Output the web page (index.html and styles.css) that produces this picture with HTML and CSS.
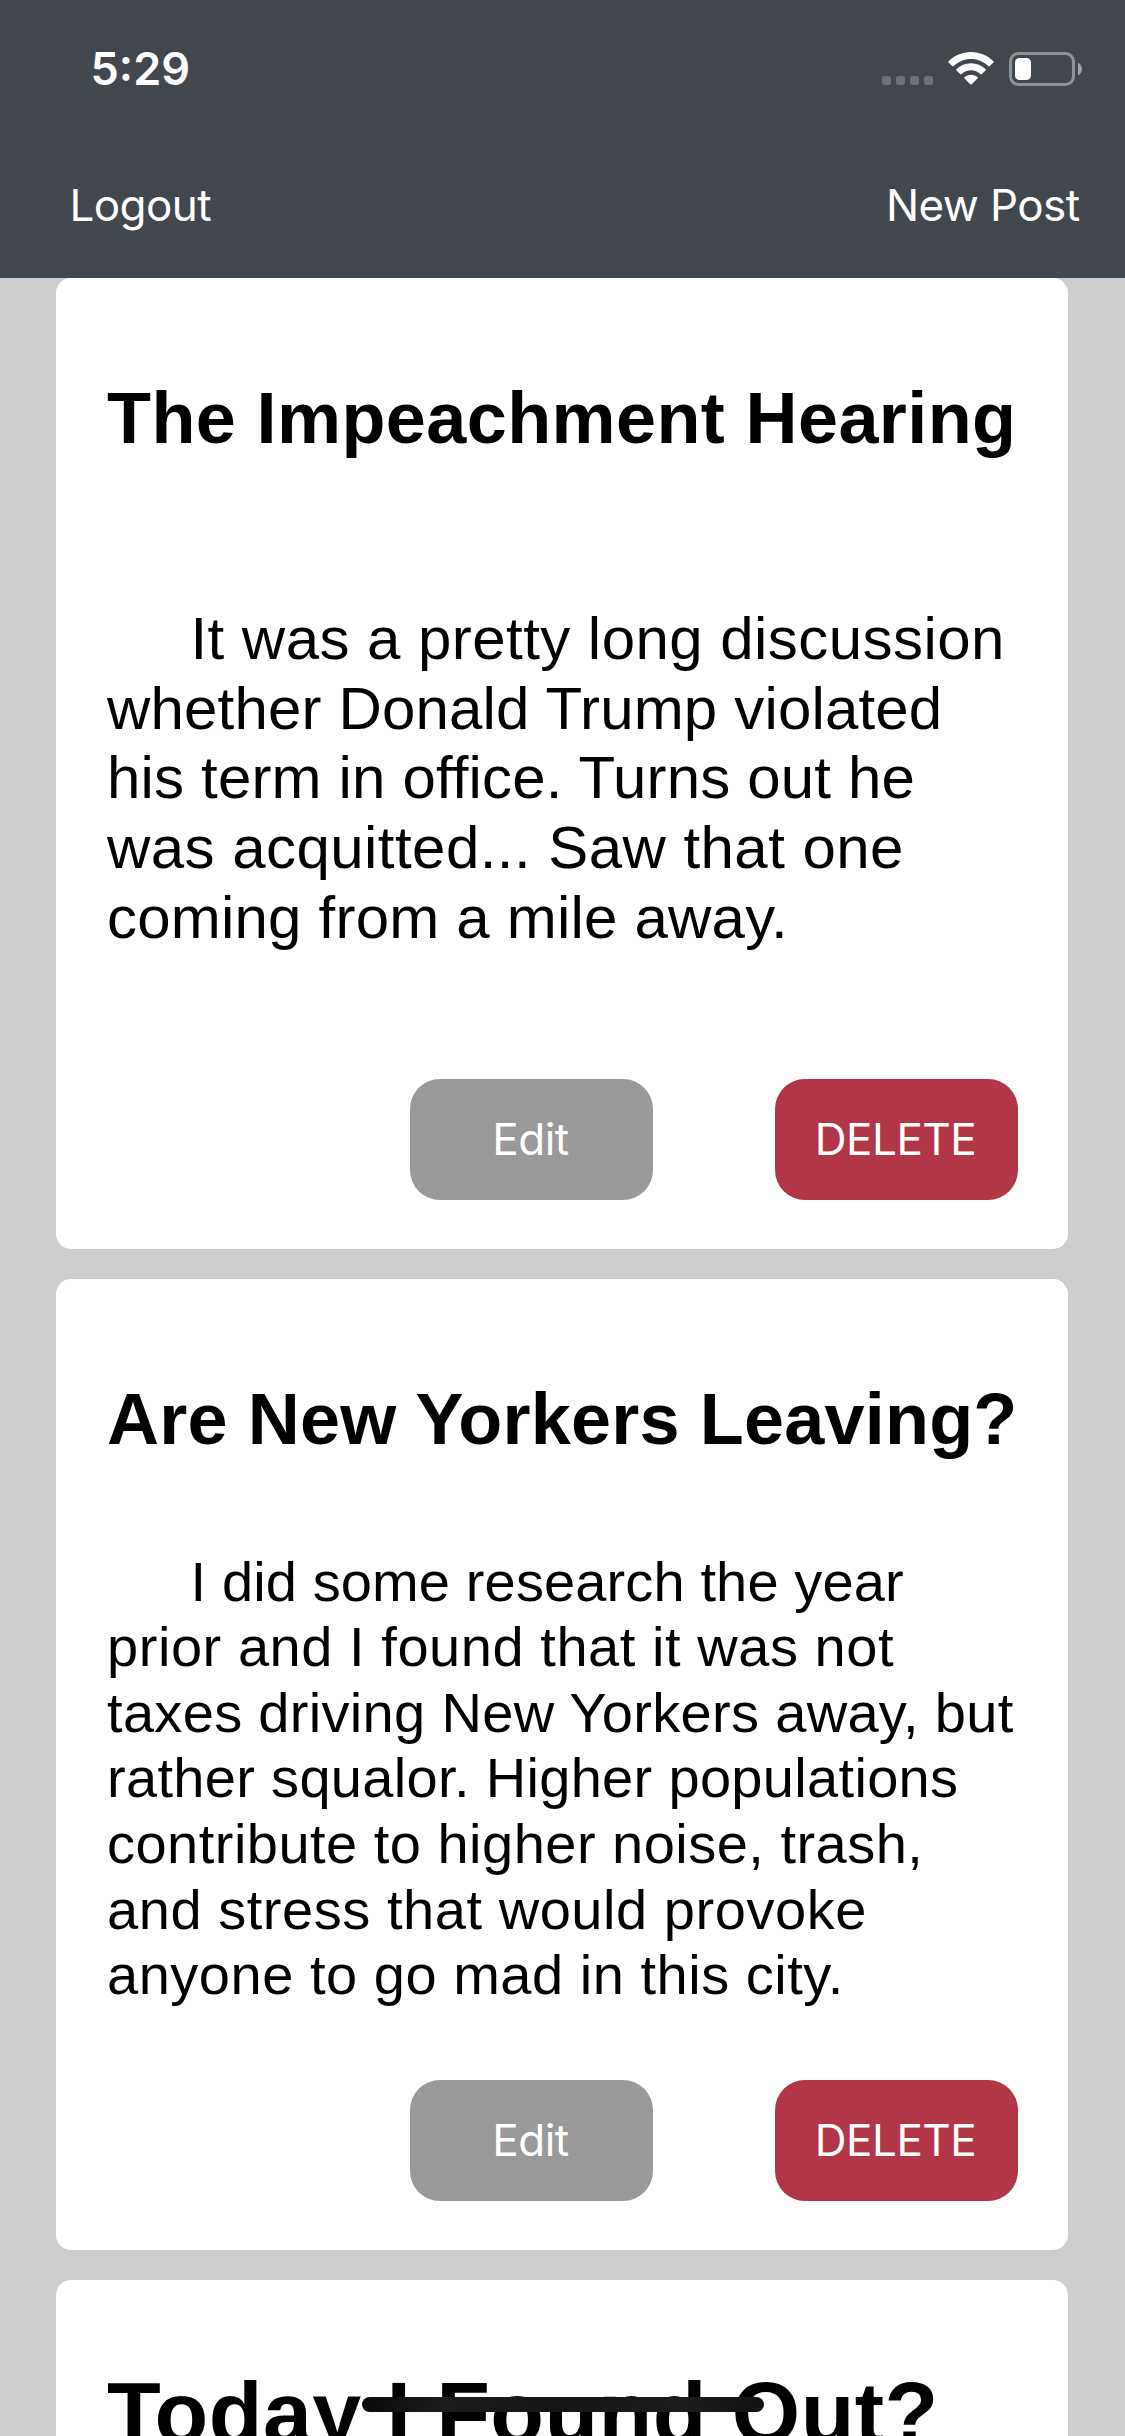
FILE: index.html
```
<!DOCTYPE html>
<html lang="en">
<head>
<meta charset="utf-8">
<title>Posts</title>
<link rel="stylesheet" href="styles.css">
</head>
<body>
<div class="screen">
  <header class="header">
    <div class="status-bar">
      <span class="time">5:29</span>
      <div class="indicators">
        <svg class="signal" width="51" height="9" viewBox="0 0 51 9" fill="#6e7176">
          <rect x="0" y="0" width="9" height="9" rx="2.5"/>
          <rect x="14" y="0" width="9" height="9" rx="2.5"/>
          <rect x="28" y="0" width="9" height="9" rx="2.5"/>
          <rect x="42" y="0" width="9" height="9" rx="2.5"/>
        </svg>
        <svg class="wifi" width="46" height="33" viewBox="0 0 46 33" fill="#fff">
          <path d="M23 0C31.900 0 39.500 3.500 45.400 9.200Q46.100 9.900 45.400 10.600L41.800 14.100Q41.100 14.700 40.400 14.100C35.800 9.700 29.700 7 23 7S10.200 9.700 5.600 14.100Q4.900 14.700 4.200 14.100L.600 10.600Q-.100 9.900 .600 9.200C6.500 3.500 14.100 0 23 0Z"/>
          <path d="M23 11.300C28.600 11.300 33.700 13.500 37.500 17.100Q38.200 17.800 37.500 18.500L33.800 22.100Q33.100 22.700 32.400 22.100C29.900 19.700 26.600 18.300 23 18.300S16.100 19.700 13.600 22.100Q12.900 22.700 12.200 22.100L8.500 18.500Q7.800 17.800 8.500 17.100C12.300 13.500 17.400 11.300 23 11.300Z"/>
          <path d="M23 22.700C25.500 22.700 27.800 23.600 29.500 25.100Q30.200 25.800 29.500 26.500L23.700 32.200Q23 32.900 22.300 32.200L16.500 26.500Q15.800 25.800 16.500 25.100C18.200 23.600 20.500 22.700 23 22.700Z"/>
        </svg>
        <svg class="battery" width="73" height="34" viewBox="0 0 73 34">
          <rect x="1.500" y="1.500" width="63" height="31" rx="8" fill="none" stroke="#8e9195" stroke-width="3"/>
          <rect x="6" y="6" width="16" height="22" rx="4.500" fill="#fff"/>
          <path d="M69 10.700C71.500 11.700 73 14.200 73 17S71.500 22.300 69 23.300Z" fill="#a0a2a6"/>
        </svg>
      </div>
    </div>
    <nav class="nav">
      <a class="nav-link">Logout</a>
      <a class="nav-link">New Post</a>
    </nav>
  </header>

  <main class="feed">
    <article class="card">
      <h2 class="title title-impeachment">The Impeachment Hearing</h2>
      <div class="body">
        <p class="text text-large">
          <span class="line indent s45">It was a pretty long discussion</span>
          <span class="line s17">whether Donald Trump violated</span>
          <span class="line s17">his term in office. Turns out he</span>
          <span class="line s45">was acquitted... Saw that one</span>
          <span class="line s21">coming from a mile away.</span>
        </p>
      </div>
      <div class="actions">
        <button class="button edit">Edit</button>
        <button class="button delete">DELETE</button>
      </div>
    </article>

    <article class="card">
      <h2 class="title title-yorkers">Are New Yorkers Leaving?</h2>
      <div class="body">
        <p class="text text-medium">
          <span class="line indent s13">I did some research the year</span>
          <span class="line s55">prior and I found that it was not</span>
          <span class="line s32">taxes driving New Yorkers away, but</span>
          <span class="line s32">rather squalor. Higher populations</span>
          <span class="line s48">contribute to higher noise, trash,</span>
          <span class="line s55">and stress that would provoke</span>
          <span class="line s52">anyone to go mad in this city.</span>
        </p>
      </div>
      <div class="actions">
        <button class="button edit">Edit</button>
        <button class="button delete">DELETE</button>
      </div>
    </article>

    <article class="card">
      <h2 class="title title-today">Today I Found Out?</h2>
    </article>
  </main>
  <div class="home-indicator"></div>
</div>
</body>
</html>
```
FILE: styles.css
```
* { box-sizing: border-box; }

body { margin: 0; }

.screen {
  position: relative;
  display: flex;
  flex-direction: column;
  width: 1125px;
  height: 2436px;
  overflow: hidden;
  background: #cdcdcd;
  font-family: "Liberation Sans", Arial, sans-serif;
  color: #000;
}

/* Header */
.header {
  flex: none;
  height: 278px;
  background: #42464d;
  color: #fff;
  font-family: Inter, sans-serif;
}

.status-bar {
  display: flex;
  align-items: center;
  justify-content: space-between;
  height: 132px;
  padding: 5px 43px 0 90.5px;
}

.time {
  font-size: 45px;
  font-weight: 600;
  line-height: 54px;
}

.indicators {
  display: flex;
  align-items: flex-end;
  height: 34px;
}

.signal { margin-bottom: 1px; }
.wifi { margin: 0 15px 1px; }

.nav {
  display: flex;
  align-items: center;
  justify-content: space-between;
  height: 146px;
  padding: 0 45.5px 0 69.5px;
}

.nav-link {
  font-size: 44px;
  line-height: 54px;
  letter-spacing: -0.6px;
}

/* Feed */
.feed {
  display: flex;
  flex-direction: column;
  gap: 30px;
  padding: 0 57px 0 56px;
}

.card {
  display: flex;
  flex: none;
  flex-direction: column;
  height: 971px;
  padding: 96.5px 50px 49px 51px;
  border-radius: 15px;
  background: #fff;
}

.title {
  flex: none;
  height: 102px;
  margin: 0;
  font-size: 72px;
  font-weight: 700;
  line-height: 86px;
  white-space: nowrap;
}

.title-impeachment { letter-spacing: 0.4px; }
.title-yorkers { letter-spacing: 0.2px; }
.title-today {
  font-size: 88px;
  line-height: 72px;
  letter-spacing: 0.4px;
}

.body {
  display: flex;
  flex: 1;
  align-items: center;
}

.text { margin: 0; }

.text-large {
  font-size: 60px;
  line-height: 69.8px;
  padding-top: 1px;
}

.text-medium {
  font-size: 56px;
  line-height: 65.57px;
  padding-bottom: 1px;
}

.line {
  display: block;
  white-space: nowrap;
}

.indent { padding-left: 83.5px; }

/* Tracking steps for body copy */
.s13 { letter-spacing: 0.13px; }
.s17 { letter-spacing: 0.17px; }
.s21 { letter-spacing: 0.21px; }
.s32 { letter-spacing: 0.32px; }
.s45 { letter-spacing: 0.45px; }
.s48 { letter-spacing: 0.48px; }
.s52 { letter-spacing: 0.52px; }
.s55 { letter-spacing: 0.55px; }

.actions {
  display: flex;
  flex: none;
  justify-content: flex-end;
  gap: 122px;
}

.button {
  width: 243px;
  height: 121px;
  padding: 0 2px 2px 0;
  border: 0;
  border-radius: 30px;
  color: #fff;
  font: 44px/54px Inter, sans-serif;
  letter-spacing: -0.48px;
}

.edit { background: #999; }
.delete { background: #b13648; }

.home-indicator {
  position: absolute;
  left: 362px;
  top: 2397px;
  width: 402px;
  height: 15px;
  border-radius: 7.5px;
  background: linear-gradient(90deg, #0a0a0a, #1c1c1c 20%, #151515 50%, #1c1c1c 80%, #121212);
}
```
